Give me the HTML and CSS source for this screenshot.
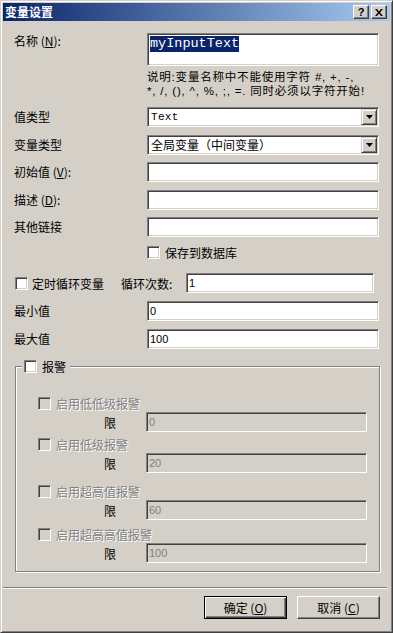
FILE: index.html
```html
<!DOCTYPE html>
<html lang="zh-CN">
<head>
  <meta charset="UTF-8" />
  <title>变量设置</title>
  <link rel="stylesheet" href="styles.css">
</head>
<body>
  <div class="window">
    <div class="titlebar">
      <span class="title">变量设置</span>
      <div class="caption-btns">
        <span class="cap-btn help">?</span>
        <span class="cap-btn">
          <svg width="8" height="7" viewBox="0 0 8 7"><path d="M0 0h2l2 2.5 2-2.5h2l-3 3.5 3 3.5h-2l-2-2.5-2 2.5h-2l3-3.5z" fill="#000"/></svg>
        </span>
      </div>
    </div>

    <div class="body">
      <div class="row row-name">
        <label class="lbl">名称 (<u>N</u>):</label>
        <div class="field name-field"><span class="sel">myInputText</span></div>
      </div>
      <div class="hint">
        <span class="hint-line">说明:变量名称中不能使用字符 #, +, -,</span>
        <span class="hint-line">*, /, (), ^, %, ;, =. 同时必须以字符开始!</span>
      </div>

      <div class="fields">
        <div class="row">
          <label class="lbl">值类型</label>
          <div class="field select">
            <span class="select-val mono">Text</span>
            <span class="drop"><svg width="7" height="4" viewBox="0 0 7 4"><path d="M0 0h7l-3.5 4z" fill="#000"/></svg></span>
          </div>
        </div>
        <div class="row">
          <label class="lbl">变量类型</label>
          <div class="field select">
            <span class="select-val">全局变量（中间变量）</span>
            <span class="drop"><svg width="7" height="4" viewBox="0 0 7 4"><path d="M0 0h7l-3.5 4z" fill="#000"/></svg></span>
          </div>
        </div>
        <div class="row">
          <label class="lbl">初始值 (<u>V</u>):</label>
          <div class="field"></div>
        </div>
        <div class="row">
          <label class="lbl">描述 (<u>D</u>):</label>
          <div class="field"></div>
        </div>
        <div class="row">
          <label class="lbl">其他链接</label>
          <div class="field"></div>
        </div>
      </div>

      <div class="check save">
        <span class="cb"></span>
        <span>保存到数据库</span>
      </div>

      <div class="timer">
        <div class="check timer-check">
          <span class="cb"></span>
          <span>定时循环变量</span>
        </div>
        <span class="cycle-lbl">循环次数:</span>
        <div class="field cycle-field"><span class="val">1</span></div>
      </div>

      <div class="limits">
        <div class="row">
          <label class="lbl">最小值</label>
          <div class="field"><span class="val">0</span></div>
        </div>
        <div class="row">
          <label class="lbl">最大值</label>
          <div class="field"><span class="val">100</span></div>
        </div>
      </div>

      <div class="group">
        <div class="legend check">
          <span class="cb"></span>
          <span>报警</span>
        </div>
        <div class="alarms">
          <div class="alarm">
            <div class="check disabled"><span class="cb off"></span><span>启用低低级报警</span></div>
            <div class="limit-row"><span class="limit-lbl">限</span><div class="field off"><span class="val">0</span></div></div>
          </div>
          <div class="alarm">
            <div class="check disabled"><span class="cb off"></span><span>启用低级报警</span></div>
            <div class="limit-row"><span class="limit-lbl">限</span><div class="field off"><span class="val">20</span></div></div>
          </div>
          <div class="alarm">
            <div class="check disabled"><span class="cb off"></span><span>启用超高值报警</span></div>
            <div class="limit-row"><span class="limit-lbl">限</span><div class="field off"><span class="val">60</span></div></div>
          </div>
          <div class="alarm">
            <div class="check disabled"><span class="cb off"></span><span>启用超高高值报警</span></div>
            <div class="limit-row"><span class="limit-lbl">限</span><div class="field off"><span class="val">100</span></div></div>
          </div>
        </div>
      </div>

      <div class="separator"></div>

      <div class="buttons">
        <button class="btn default">确定 (<u>O</u>)</button>
        <button class="btn">取消 (<u>C</u>)</button>
      </div>
    </div>
  </div>
</body>
</html>
```

FILE: styles.css
```css
* {
  box-sizing: border-box;
}
body {
  margin: 0;
  background: #d4d0c8;
  font-family: "Noto Sans CJK SC", "Liberation Sans", sans-serif;
  font-size: 12px;
  color: #000;
}
.window {
  width: 393px;
  height: 633px;
  background: #d4d0c8;
  border: 1px solid;
  border-color: #d4d0c8 #404040 #404040 #d4d0c8;
  box-shadow: inset 1px 1px #fff, inset -1px -1px #808080;
  padding: 2px;
  display: flex;
  flex-direction: column;
}
.titlebar {
  height: 18px;
  background: linear-gradient(to right, #0a246a, #a6caf0);
  display: flex;
  align-items: center;
  justify-content: space-between;
  padding: 0 3px 0 2px;
}
.title {
  color: #fff;
  font-weight: bold;
  font-size: 12px;
  line-height: 18px;
}
.caption-btns {
  display: flex;
  gap: 2px;
}
.cap-btn {
  width: 16px;
  height: 14px;
  background: #d4d0c8;
  border: 1px solid;
  border-color: #fff #404040 #404040 #fff;
  box-shadow: inset -1px -1px #808080;
  display: flex;
  align-items: center;
  justify-content: center;
}
.cap-btn.help {
  font-family: "Liberation Sans", sans-serif;
  font-weight: bold;
  font-size: 11px;
  line-height: 12px;
}
.body {
  flex: 1;
  padding: 12px 0 0 11px;
  display: flex;
  flex-direction: column;
}
.row {
  display: grid;
  grid-template-columns: 133px 232px;
  align-items: center;
  height: 20px;
}
.lbl {
  line-height: 14px;
  white-space: nowrap;
}
.row-name {
  height: 33px;
  align-items: start;
}
.row-name .lbl {
  padding-top: 1px;
}
.field {
  height: 20px;
  background: #fff;
  border: 1px solid;
  border-color: #808080 #fff #fff #808080;
  box-shadow: inset 1px 1px #404040, inset -1px -1px #d4d0c8;
  display: flex;
  align-items: center;
  overflow: hidden;
}
.field.off {
  background: #d4d0c8;
}
.field .val {
  padding-left: 2px;
  font-family: "Liberation Sans", sans-serif;
  font-size: 11px;
}
.field.off .val {
  color: #808080;
}
.name-field {
  height: 33px;
  align-items: flex-start;
  padding: 2px 0 0 2px;
}
.sel {
  background: #0a246a;
  color: #fff;
  font-family: "Liberation Mono", monospace;
  font-size: 13.5px;
  line-height: 16px;
}
.hint {
  margin: 5px 0 0 133px;
  display: flex;
  flex-direction: column;
  gap: 1px;
}
.hint-line {
  height: 13px;
  font-family: "Liberation Sans", "Noto Sans CJK SC", sans-serif;
  font-size: 11.5px;
  line-height: 13px;
  letter-spacing: 0.8px;
  white-space: nowrap;
}
.fields {
  margin-top: 9px;
  display: flex;
  flex-direction: column;
  gap: 7.5px;
}
.select {
  justify-content: space-between;
  padding: 1px;
}
.select-val {
  padding-left: 2px;
  line-height: 16px;
}
.mono {
  font-family: "Liberation Mono", monospace;
  font-size: 11px;
  letter-spacing: 0.3px;
}
.drop {
  width: 16px;
  height: 16px;
  background: #d4d0c8;
  border: 1px solid;
  border-color: #d4d0c8 #404040 #404040 #d4d0c8;
  box-shadow: inset 1px 1px #fff, inset -1px -1px #808080;
  display: flex;
  align-items: center;
  justify-content: center;
}
.check {
  display: flex;
  align-items: center;
  gap: 5px;
  height: 13px;
  white-space: nowrap;
}
.cb {
  width: 13px;
  height: 13px;
  flex: none;
  background: #fff;
  border: 1px solid;
  border-color: #808080 #fff #fff #808080;
  box-shadow: inset 1px 1px #404040, inset -1px -1px #d4d0c8;
}
.cb.off {
  background: #d4d0c8;
}
.disabled {
  color: #808080;
  text-shadow: 1px 1px #fff;
}
.save {
  margin: 9px 0 0 133px;
}
.timer {
  margin-top: 14px;
  padding-left: 1px;
  height: 20px;
  display: flex;
  align-items: center;
}
.timer-check {
  width: 106px;
  gap: 4px;
}
.cycle-lbl {
  width: 65px;
}
.cycle-field {
  width: 188px;
}
.limits {
  margin-top: 8px;
  display: flex;
  flex-direction: column;
  gap: 8px;
}
.group {
  position: relative;
  margin: 17px 0 0 1px;
  width: 365px;
  height: 206px;
  border: 1px solid #808080;
  box-shadow: inset 1px 1px #fff, 1px 1px #fff;
  padding: 30px 0 0 22px;
}
.legend {
  position: absolute;
  top: -7px;
  left: 6px;
  padding: 0 4px 0 2px;
  background: #d4d0c8;
}
.alarm {
  display: flex;
  flex-direction: column;
  gap: 2px;
}
.alarm:nth-child(2) {
  margin-top: 6px;
}
.alarm:nth-child(3) {
  margin-top: 12px;
}
.alarm:nth-child(4) {
  margin-top: 8px;
}
.limit-row {
  display: flex;
  align-items: center;
  height: 20px;
  padding-left: 66px;
}
.limit-lbl {
  width: 42px;
}
.limit-row .field {
  width: 221px;
}
.separator {
  margin: 15px 0 0 -11px;
  width: 384px;
  height: 2px;
  border-top: 1px solid #808080;
  border-bottom: 1px solid #fff;
}
.buttons {
  margin-top: 7px;
  padding-right: 10px;
  display: flex;
  justify-content: flex-end;
  gap: 10px;
}
.btn {
  width: 83px;
  height: 23px;
  padding: 0;
  background: #d4d0c8;
  font-family: "Noto Sans CJK SC", "Liberation Sans", sans-serif;
  font-size: 12px;
  color: #000;
  border: 1px solid;
  border-color: #fff #404040 #404040 #fff;
  box-shadow: inset -1px -1px #808080;
}
.btn.default {
  border-color: #000;
  box-shadow: inset 1px 1px #fff, inset -1px -1px #404040, inset -2px -2px #808080;
}
```
